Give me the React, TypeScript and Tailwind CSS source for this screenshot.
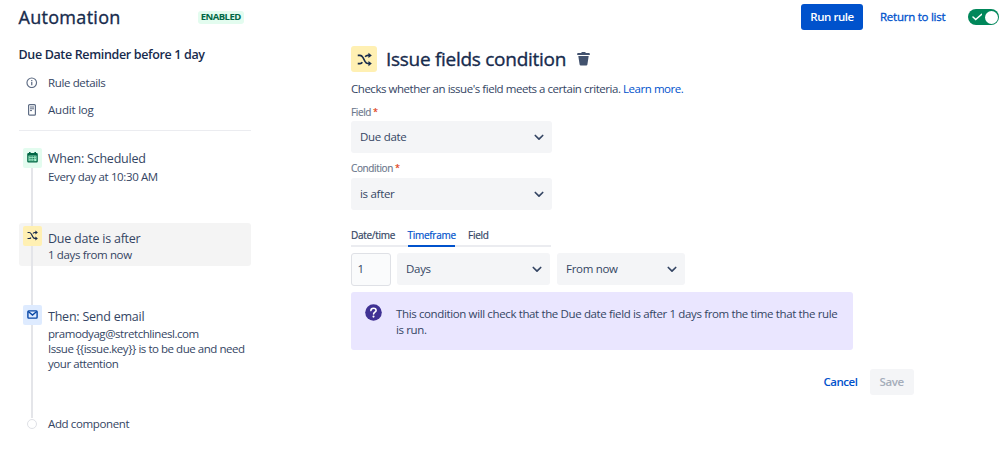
import type { ReactNode } from 'react'

function ShuffleIcon({ size }: { size: number }) {
  return (
    <svg width={size} height={size} viewBox="0 0 16 16" fill="none" stroke="#172b4d" strokeWidth="1.7">
      <path d="M.8 3.6h2.4c1.5 0 2.3.9 3.1 2.2l2.2 4.2c.8 1.4 1.6 2.3 3.1 2.3h1.8" />
      <path d="M.8 12.4h2.4c1.2 0 1.9-.5 2.5-1.4M8.7 5.1c.7-.9 1.5-1.5 2.9-1.5h1.8" />
      <path d="M12.2.8 15.8 3.6 12.2 6.4zM12.2 9.5l3.6 2.8-3.6 2.8z" fill="#172b4d" stroke="none" />
    </svg>
  )
}

function CalendarIcon() {
  return (
    <svg width="11" height="11" viewBox="0 0 11 11">
      <path d="M2 0h1.6v1h3.8V0H9v1h.6a1.2 1.2 0 0 1 1.2 1.2v7a1.3 1.3 0 0 1-1.3 1.3h-8A1.3 1.3 0 0 1 .2 9.2v-7A1.2 1.2 0 0 1 1.4 1H2z" fill="#006644" />
      <path d="M1.5 3.6h8v5.6h-8z" fill="#abf5d1" />
      <path d="M2.5 4.7h6M2.5 6.4h6M2.5 8.1h5" stroke="#006644" strokeWidth="1" strokeDasharray="1.2 .6" />
    </svg>
  )
}

function MailIcon() {
  return (
    <svg width="11" height="9" viewBox="0 0 11 9" fill="none" stroke="#0747a6" strokeWidth="1.4">
      <rect x=".9" y=".9" width="9.2" height="7.2" rx=".8" />
      <path d="m1.3 1.5 4.2 3.6 4.2-3.6" />
    </svg>
  )
}

function Chevron() {
  return (
    <svg width="10" height="7" viewBox="0 0 10 7" fill="none" stroke="#344563" strokeWidth="1.7" strokeLinecap="round" strokeLinejoin="round">
      <path d="m1.3 1.5 3.7 3.6 3.7-3.6" />
    </svg>
  )
}

interface SelectProps { value: string; className: string }

function Select({ value, className }: SelectProps) {
  return (
    <div className={`flex items-center justify-between rounded-[3px] bg-[#f4f5f7] pr-[8px] pl-[9px] tracking-[-0.3px] ${className}`}>
      <span>{value}</span>
      <Chevron />
    </div>
  )
}

function Label({ children }: { children: ReactNode }) {
  return (
    <div className="flex h-[14px] items-center text-[10px] text-[#6b778c] [-webkit-text-stroke:0.15px]">
      {children}
      <span className="ml-[2px] text-[9px] text-[#de350b]">*</span>
    </div>
  )
}

interface StepProps {
  title: string
  icon: ReactNode
  className: string
  iconClass: string
  children: ReactNode
}

function Step({ title, icon, className, iconClass, children }: StepProps) {
  return (
    <div className={`relative flex rounded-[3px] pl-[4px] ${className}`}>
      <div className={`z-10 flex h-[19.5px] w-[19px] shrink-0 items-center justify-center rounded-[2px] ${iconClass}`}>
        {icon}
      </div>
      <div className="pt-[6px] pl-[6.5px] whitespace-nowrap">
        <p className="text-[12.5px] leading-[19px] tracking-[-0.23px]">{title}</p>
        {children}
      </div>
    </div>
  )
}

function Sidebar() {
  return (
    <aside className="w-[232.5px] shrink-0 pt-[11px]">
      <h2 className="text-[12.5px] leading-[20px] font-semibold tracking-[-0.35px] whitespace-nowrap text-[#172b4d]">
        Due Date Reminder before 1 day
      </h2>
      <nav className="mt-[4px] h-[61.5px] border-b-[1.5px] border-[#ebecf0]">
        <a className="flex h-[27px] items-center">
          <svg className="mr-[10.5px] ml-[7.5px]" width="11.5" height="11.5" viewBox="0 0 12 12" fill="none" stroke="#5e6c84">
            <circle cx="6" cy="6" r="5" strokeWidth="1.2" />
            <path d="M6 5.3v3.2M6 3.2v1.2" strokeWidth="1.3" />
          </svg>
          Rule details
        </a>
        <a className="flex h-[27px] items-center tracking-[-0.2px]">
          <svg className="mr-[12px] ml-[9.5px]" width="8" height="12" viewBox="0 0 8 12" fill="none" stroke="#5e6c84">
            <rect x=".6" y=".6" width="6.8" height="10.6" rx="1" strokeWidth="1.2" />
            <path d="M2 3h4M2 4.8h4M2 6.6h2" />
          </svg>
          Audit log
        </a>
      </nav>
      <div className="relative pt-[12.5px] leading-[15px]">
        <div className="absolute top-[36px] left-[12.5px] z-[5] h-[251px] w-[1.5px] bg-[#e4e5e9]" />
        <Step title="When: Scheduled" icon={<CalendarIcon />} className="h-[79.5px]" iconClass="mt-[5px] bg-[#e3fcef]">
          <p className="mt-px">Every day at 10:30 AM</p>
        </Step>
        <Step title="Due date is after" icon={<ShuffleIcon size={11} />} className="h-[43.5px] bg-[#f4f4f4]" iconClass="mt-[3.5px] bg-[#fff0b3]">
          <p className="-mt-px">1 days from now</p>
        </Step>
        <Step title="Then: Send email" icon={<MailIcon />} className="mt-[34.5px] h-[115px]" iconClass="mt-[4.5px] bg-[#deebff]">
          <p className="tracking-[-0.44px]">pramodyag@stretchlinesl.com</p>
          <p className="tracking-[-0.46px]">Issue {'{{issue.key}}'} is to be due and need</p>
          <p className="tracking-[-0.44px]">your attention</p>
        </Step>
        <div className="flex h-[16px] items-center pl-[8px]">
          <span className="z-10 mr-[11.5px] size-[10px] rounded-full border border-[#dfe1e6] bg-white" />
          Add component
        </div>
      </div>
    </aside>
  )
}

function Tabs() {
  return (
    <div className="mt-[17px] flex h-[20px] w-[200px] border-b-2 border-[#ebecf0] text-[10px] leading-[16px] tracking-[-0.28px] [-webkit-text-stroke:0.2px]">
      <span className="w-[56.5px]">Date/time</span>
      <span className="h-[20px] w-[47.5px] border-b-2 border-[#0052cc] text-center text-[#0052cc]">Timeframe</span>
      <span className="ml-[13px]">Field</span>
    </div>
  )
}

export default function App() {
  return (
    <div className="h-[454px] w-[999px] overflow-hidden bg-white pl-[18.5px] font-['Open_Sans',sans-serif] text-[11.5px] leading-[16px] tracking-[-0.37px] text-[#344563]">
      <header className="flex h-[34px] items-center">
        <h1 className="w-[179px] text-[18px] leading-[26px] tracking-[0.3px] text-[#172b4d] [-webkit-text-stroke:0.35px]">Automation</h1>
        <span className="flex h-[13px] w-[46.5px] items-center justify-center rounded-[3px] bg-[#e3fcef] text-[9.5px] font-bold tracking-[-0.5px] text-[#006644]">ENABLED</span>
        <button className="ml-auto h-[25.5px] w-[62px] rounded-[3px] bg-[#0052cc] font-semibold tracking-[-0.45px] text-white">Run rule</button>
        <a className="ml-[17px] w-[88px] tracking-[-0.25px] whitespace-nowrap text-[#0052cc] [-webkit-text-stroke:0.3px]">Return to list</a>
        <div className="flex h-[15.5px] w-[31px] items-center justify-between rounded-full bg-[#00875a] pr-[1px] pl-[4px]">
          <svg width="10" height="8" viewBox="0 0 10 8" fill="none" stroke="white" strokeWidth="1.5" strokeLinecap="round">
            <path d="m1 4 2.7 2.6 6-5.4" />
          </svg>
          <span className="size-[13px] rounded-full bg-white" />
        </div>
      </header>
      <div className="flex">
        <Sidebar />
        <main className="ml-[100px] w-[562.5px] pt-[12px]">
          <div className="flex h-[26px] items-center">
            <div className="flex size-[26px] items-center justify-center rounded-[3px] bg-[#fff0b3]">
              <ShuffleIcon size={15} />
            </div>
            <h2 className="ml-[9px] w-[191px] text-[19px] leading-[26px] tracking-[-0.28px] whitespace-nowrap text-[#172b4d] [-webkit-text-stroke:0.35px]">Issue fields condition</h2>
            <svg width="13" height="14" viewBox="0 0 13 14" fill="#42526e">
              <path d="M4.5 0h4v1H12a.8.8 0 0 1 .8.8V3H.2V1.8A.8.8 0 0 1 1 1h3.5zM1.3 4h10.4l-1.3 8.4a1.2 1.2 0 0 1-1.2 1H3.8a1.2 1.2 0 0 1-1.2-1z" />
            </svg>
          </div>
          <p className="mt-[8.5px] tracking-[-0.46px] whitespace-nowrap">
            Checks whether an issue's field meets a certain criteria. <a className="text-[#0052cc]">Learn more.</a>
          </p>
          <div className="mt-[8px]">
            <Label>Field</Label>
          </div>
          <Select value="Due date" className="mt-[2.5px] h-[32px] w-[200.5px]" />
          <div className="mt-[8px] mb-[3px]">
            <Label>Condition</Label>
          </div>
          <Select value="is after" className="h-[32px] w-[200.5px]" />
          <Tabs />
          <div className="mt-[6px] flex h-[32.5px]">
            <div className="flex w-[40px] items-center rounded-[3px] border-[1.5px] border-[#dfe1e6] bg-[#fafbfc] pl-[5.5px]">1</div>
            <Select value="Days" className="ml-[6px] h-[32px] w-[153px]" />
            <Select value="From now" className="ml-[7px] h-[32px] w-[128px]" />
          </div>
          <div className="mt-[6.5px] flex h-[58px] w-[502px] rounded-[3px] bg-[#eae6ff] pt-[12px] pl-[14px]">
            <svg className="mr-[14px] shrink-0" width="17" height="17" viewBox="0 0 17 17">
              <circle cx="8.5" cy="8.5" r="8.3" fill="#403294" />
              <path d="M5.9 6.6c0-1.5 1.1-2.4 2.6-2.4s2.6.9 2.6 2.2c0 1.7-2.5 1.9-2.5 3.6" fill="none" stroke="white" strokeWidth="1.6" strokeLinecap="round" />
              <circle cx="8.5" cy="12.6" r="1.05" fill="white" />
            </svg>
            <p className="pt-[1.5px] whitespace-nowrap">
              This condition will check that the Due date field is after 1 days from the time that the rule
              <br />
              is run.
            </p>
          </div>
          <div className="mt-[19px] flex h-[26px] items-center justify-end font-semibold">
            <span className="mr-[12.5px] tracking-[-0.45px] text-[#0052cc]">Cancel</span>
            <button className="h-[26px] w-[43.5px] rounded-[3px] bg-[#f4f5f7] text-[#a5adba]">Save</button>
          </div>
        </main>
      </div>
    </div>
  )
}
